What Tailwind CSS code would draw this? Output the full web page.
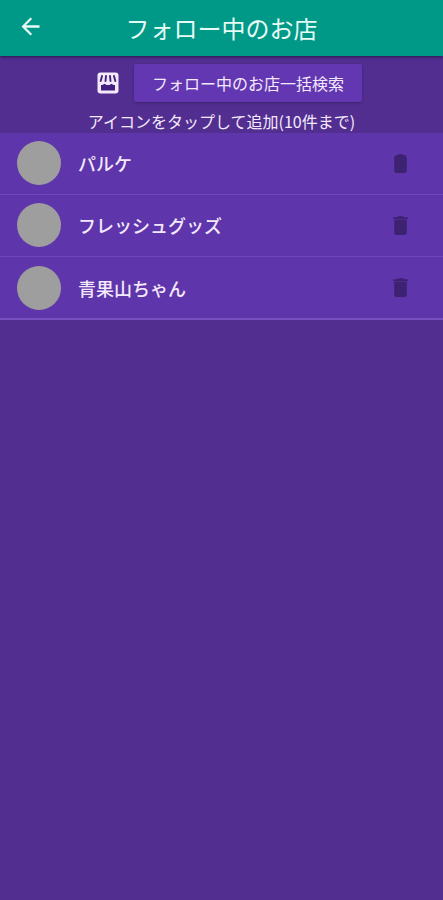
<!DOCTYPE html>
<html lang="ja">
<head>
    <meta charset="UTF-8">
    <meta name="viewport" content="width=device-width, initial-scale=1.0">
    <title>フォロー中のお店</title>
    <script src="https://cdn.jsdelivr.net/npm/@tailwindcss/browser@4"></script>
</head>
<body class="min-h-screen bg-[#522e91] text-[#f3e9fb] font-['Noto_Sans_CJK_JP',sans-serif]">
    <header class="relative grid h-14 grid-cols-[60px_1fr_60px] items-center bg-[#009887] text-[#e6fbf6] shadow-[0_1px_3px_rgba(0,0,0,0.5)]">
        <button type="button" aria-label="戻る" class="flex h-14 items-center justify-center">
            <svg class="-mt-1 size-[27px]" viewBox="0 0 24 24" fill="currentColor"><path d="M20 10.8H7.83l5.59-5.39L12 4l-8 8 8 8 1.41-1.41L7.83 13.2H20z"/></svg>
        </button>
        <h1 class="text-center text-2xl">フォロー中のお店</h1>
    </header>

    <main>
        <div class="flex items-center justify-center gap-3 pt-2 pl-[13px]">
            <button type="button" aria-label="お店を追加" class="flex size-7 items-center justify-center">
                <svg class="size-6" viewBox="0 0 24 24" fill="none">
                    <rect x="1.5" y="1.5" width="21" height="21" rx="3" fill="currentColor"/>
                    <path d="M5 14c1.500 0 2.500-.4 3.500-1.200 1 .8 2 1.200 3.500 1.200s2.500-.4 3.500-1.200c1 .8 2 1.200 3.500 1.200v5.500H5z" fill="#43207f"/>
                    <path d="M6 5L4.700 10M10 5l-.5 5M14 5l.5 5M18 5l1.300 5" stroke="#43207f" stroke-width="1.9" stroke-linecap="round"/>
                </svg>
            </button>
            <button type="button" class="h-[38px] rounded-xs bg-[#6337b2] px-[18px] text-base shadow-[0_1px_3px_rgba(0,0,0,0.25)]">フォロー中のお店一括検索</button>
        </div>
        <p class="pt-2 text-center text-base leading-[23px]">アイコンをタップして追加(10件まで)</p>

        <ul class="border-b border-[#7850c0] bg-[#5e35aa] text-lg font-medium">
            <li class="flex h-[62px] items-center border-b border-[#7049b9] pr-[29px] pb-px pl-[17px]">
                <span class="mr-[17px] size-11 rounded-full bg-[#9e9e9e]"></span>
                <span class="flex-1">パルケ</span>
                <button type="button" aria-label="パルケを削除" class="flex size-7 items-center justify-center text-[#3d2272]">
                    <svg class="size-[25px]" viewBox="0 0 24 24" fill="currentColor"><path d="M6 19c0 1.1.9 2 2 2h8c1.1 0 2-.9 2-2V5.5H6zM17 4h-2l-1-1h-4l-1 1H7v1.500h10z"/></svg>
                </button>
            </li>
            <li class="flex h-[62px] items-center border-b border-[#7049b9] pr-[29px] pb-px pl-[17px]">
                <span class="mr-[17px] size-11 rounded-full bg-[#9e9e9e]"></span>
                <span class="flex-1">フレッシュグッズ</span>
                <button type="button" aria-label="フレッシュグッズを削除" class="flex size-7 items-center justify-center text-[#3d2272]">
                    <svg class="size-[25px]" viewBox="0 0 24 24" fill="currentColor"><path d="M6 19c0 1.1.9 2 2 2h8c1.1 0 2-.9 2-2V6.500H6zM19 4h-3.500l-1-1h-5l-1 1H5v2h14z"/></svg>
                </button>
            </li>
            <li class="flex h-[62px] items-center border-b border-[#7850c0] pr-[29px] pl-[17px]">
                <span class="mr-[17px] size-11 rounded-full bg-[#9e9e9e]"></span>
                <span class="flex-1">青果山ちゃん</span>
                <button type="button" aria-label="青果山ちゃんを削除" class="flex size-7 items-center justify-center text-[#3d2272]">
                    <svg class="size-[25px]" viewBox="0 0 24 24" fill="currentColor"><path d="M6 19c0 1.1.9 2 2 2h8c1.1 0 2-.9 2-2V6.500H6zM19 4h-3.500l-1-1h-5l-1 1H5v2h14z"/></svg>
                </button>
            </li>
        </ul>
    </main>
</body>
</html>
